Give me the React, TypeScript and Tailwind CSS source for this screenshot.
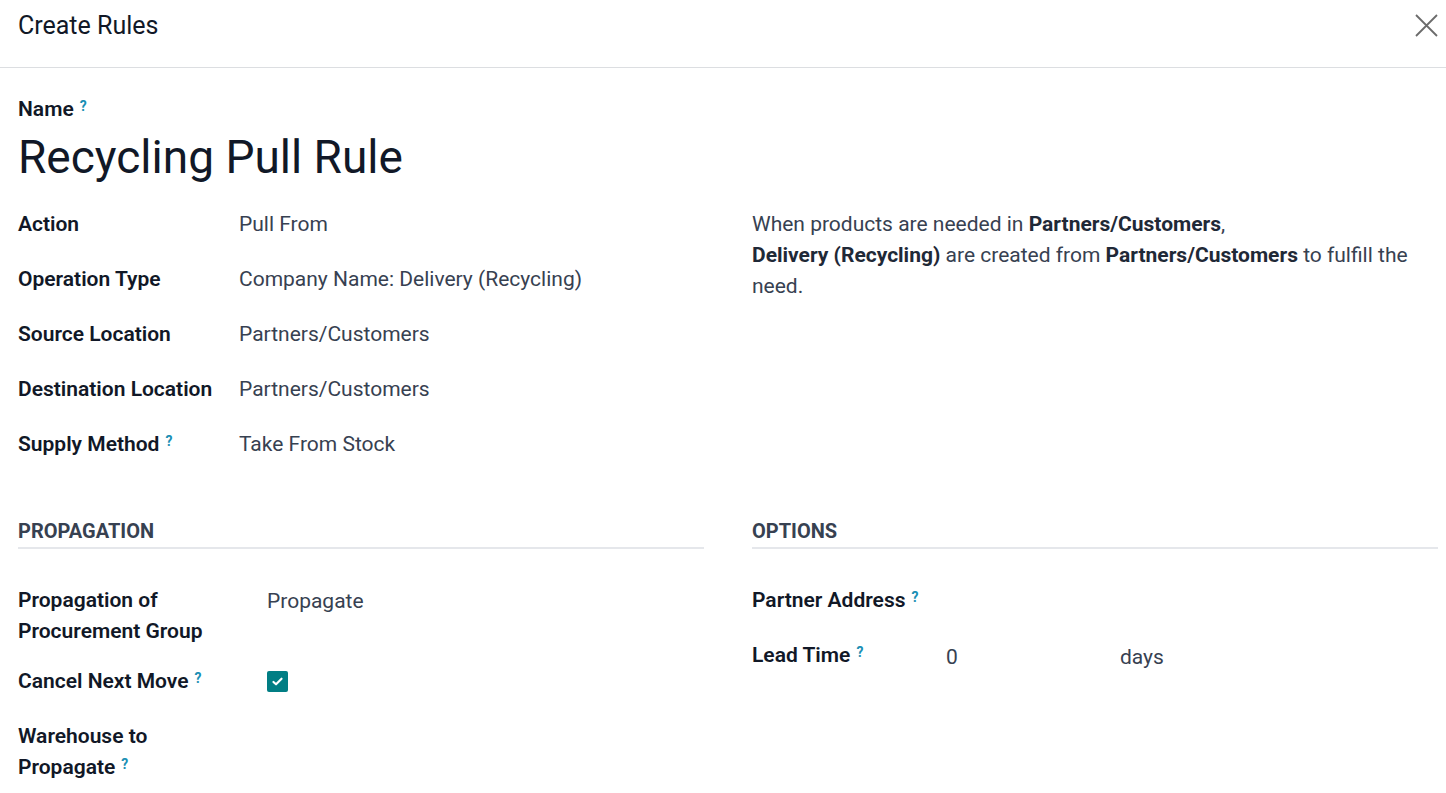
import React from 'react';

function Help() {
  return (
    <sup className="ml-[6px] text-[14px] font-bold text-[#1a8fb4] relative -top-[5px]">?</sup>
  );
}

function Label({ children, help }: { children: React.ReactNode; help?: boolean }) {
  return (
    <div className="font-semibold text-[#111827]">
      {children}
      {help && <Help />}
    </div>
  );
}

const topRows: { label: string; value: string; help?: boolean }[] = [
  { label: 'Action', value: 'Pull From' },
  { label: 'Operation Type', value: 'Company Name: Delivery (Recycling)' },
  { label: 'Source Location', value: 'Partners/Customers' },
  { label: 'Destination Location', value: 'Partners/Customers' },
  { label: 'Supply Method', value: 'Take From Stock', help: true },
];

export default function App() {
  return (
    <div className="min-h-screen bg-white text-[21px] leading-[31px] text-[#374151]" style={{ fontFamily: 'Roboto, "Noto Sans", sans-serif' }}>
      {/* Header */}
      <div className="h-[68px] border-b border-[#dcdee1] flex items-start justify-between pl-[18px] pr-[8px] pt-[10px]">
        <h1 className="text-[25px] leading-[31px] text-[#111827]">Create Rules</h1>
        <button className="mt-[4px] text-[#6b6b6b]">
          <svg width="23" height="23" viewBox="0 0 23 23" fill="none" stroke="currentColor" strokeWidth="1.8">
            <path d="M1 1L22 22M22 1L1 22" />
          </svg>
        </button>
      </div>

      <div className="pl-[18px] pr-[8px] pt-[26px]">
        <Label help>Name</Label>
        <div className="text-[46px] leading-[56px] text-[#111827] mt-[4px]">Recycling Pull Rule</div>

        {/* Main fields */}
        <div className="flex gap-[48px] mt-[24px]">
          <div className="flex-1 flex flex-col gap-[24px]">
            {topRows.map((r) => (
              <div key={r.label} className="flex leading-[31px]">
                <div className="w-[221px] shrink-0">
                  <Label help={r.help}>{r.label}</Label>
                </div>
                <div>{r.value}</div>
              </div>
            ))}
          </div>
          <div className="flex-1">
            <p className="leading-[31px]">
              When products are needed in <b className="text-[#1f2937]">Partners/Customers</b>,
              <br />
              <b className="text-[#1f2937]">Delivery (Recycling)</b> are created from{' '}
              <b className="text-[#1f2937]">Partners/Customers</b> to fulfill the need.
            </p>
          </div>
        </div>

        {/* Sections */}
        <div className="flex gap-[48px] mt-[56px]">
          <div className="flex-1">
            <div className="text-[20px] font-bold text-[#374151] uppercase border-b-2 border-[#e5e7eb]">Propagation</div>
            <div className="flex flex-col mt-[36px]">
              <div className="flex">
                <div className="w-[249px] shrink-0">
                  <Label>
                    Propagation of
                    <br />
                    Procurement Group
                  </Label>
                </div>
                <div className="pt-[1px]">Propagate</div>
              </div>
              <div className="flex mt-[19px]">
                <div className="w-[249px] shrink-0">
                  <Label help>Cancel Next Move</Label>
                </div>
                <div className="pt-[5px]">
                  <span className="flex items-center justify-center w-[21px] h-[21px] rounded-[2px] bg-[#017e84]">
                    <svg width="13" height="13" viewBox="0 0 16 16" fill="none" stroke="white" strokeWidth="2.6" strokeLinecap="round" strokeLinejoin="round">
                      <path d="M3 8.5l3.2 3L13 4.5" />
                    </svg>
                  </span>
                </div>
              </div>
              <div className="flex mt-[24px]">
                <div className="w-[249px] shrink-0">
                  <Label help>
                    Warehouse to
                    <br />
                    Propagate
                  </Label>
                </div>
              </div>
            </div>
          </div>
          <div className="flex-1">
            <div className="text-[20px] font-bold text-[#374151] uppercase border-b-2 border-[#e5e7eb]">Options</div>
            <div className="flex flex-col gap-[24px] mt-[36px]">
              <div className="flex">
                <Label help>Partner Address</Label>
              </div>
              <div className="flex">
                <div className="w-[194px] shrink-0">
                  <Label help>Lead Time</Label>
                </div>
                <div className="w-[174px] pt-[2px]">0</div>
                <div className="pt-[2px]">days</div>
              </div>
            </div>
          </div>
        </div>
      </div>
    </div>
  );
}
